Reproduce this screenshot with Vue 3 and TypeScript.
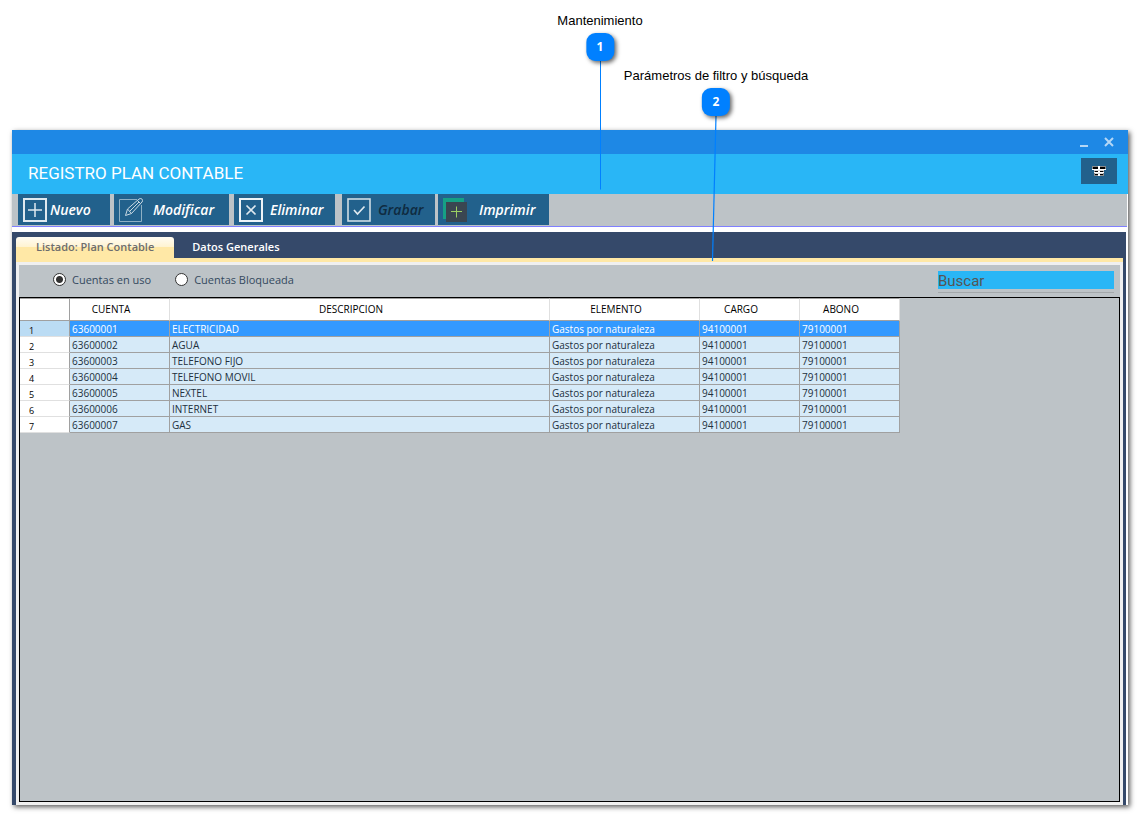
<script setup lang="ts">
import { ref } from 'vue'

interface Account {
  code: string
  description: string
  element: string
  debit: string
  credit: string
}

const names: string[] = ['ELECTRICIDAD', 'AGUA', 'TELEFONO FIJO', 'TELEFONO MOVIL', 'NEXTEL', 'INTERNET', 'GAS']
const accounts: Account[] = names.map((description, i) => ({
  code: `6360000${i + 1}`,
  description,
  element: 'Gastos por naturaleza',
  debit: '94100001',
  credit: '79100001',
}))

const selected = ref<number>(0)
const filter = ref<string>('uso')
const search = ref<string>('')
</script>

<template>
  <div class="page">
    <main class="window">
      <div class="titlebar">
        <button type="button" class="winbtn" aria-label="Minimizar">
          <svg width="10" height="12" viewBox="0 0 10 12"><path d="M1 10h8" stroke="#b4d7f6" stroke-width="2" /></svg>
        </button>
        <button type="button" class="winbtn" aria-label="Cerrar">
          <svg width="10" height="12" viewBox="0 0 10 12"><path d="M1 2l8 8M9 2l-8 8" stroke="#b4d7f6" stroke-width="2" /></svg>
        </button>
      </div>

      <header class="header">
        <h1>REGISTRO PLAN CONTABLE</h1>
        <button type="button" class="gridbtn" aria-label="Columnas">
          <svg width="14" height="10" viewBox="0 0 14 10" shape-rendering="crispEdges">
            <path d="M0 0h14v3H0zM2 5h10v5H2z" fill="#8a8a8a" />
            <path d="M1 1h12v2H1zM3 5h8v1H3zM3 8h8v1H3z" fill="#000" />
            <path d="M0 3h14v1H0zM2 6h10v1H2zM6 0h2v10H6z" fill="#fff" />
            <path d="M2 4h10v1H2zM3 7h8v1H3z" fill="#ddd" />
          </svg>
        </button>
      </header>

      <nav class="toolbar" aria-label="Mantenimiento">
        <button type="button" class="tool nuevo">
          <svg width="24" height="24" viewBox="0 0 24 24" fill="none">
            <rect x="1" y="1" width="22" height="22" stroke="#dfe9ef" stroke-width="2" />
            <path d="M12 5v14M5 12h14" stroke="#dfe9ef" stroke-width="1.5" />
          </svg>
          <span>Nuevo</span>
        </button>
        <button type="button" class="tool modificar">
          <svg width="24" height="24" viewBox="0 0 24 24" fill="none" stroke="#c9d9e3">
            <path d="M18 1.500H.5V23.500H22.500V7" stroke="#8fb0c4" />
            <path d="M6.500 17.500l2-6.500L20 1q2-1.200 3.200.300 1 1.500-.2 2.700L12.500 15.500zM8.500 11l4 4.500M18.500 2.500l3 3M10.500 13.500l9.500-9.500" />
          </svg>
          <span>Modificar</span>
        </button>
        <button type="button" class="tool eliminar">
          <svg width="24" height="24" viewBox="0 0 24 24" fill="none">
            <rect x="1" y="1" width="22" height="22" stroke="#eef3f6" stroke-width="2" />
            <path d="M7.500 7.500l9 9M16.500 7.500l-9 9" stroke="#dfe9ef" stroke-width="1.700" />
          </svg>
          <span>Eliminar</span>
        </button>
        <button type="button" class="tool grabar" disabled>
          <svg width="24" height="24" viewBox="0 0 24 24" fill="none">
            <rect x="1" y="1" width="22" height="22" stroke="#cfdce4" stroke-width="1.600" />
            <path d="M7 12l3.500 4L17.500 8.500" stroke="#dfe9ef" stroke-width="1.700" />
          </svg>
          <span>Grabar</span>
        </button>
        <button type="button" class="tool imprimir">
          <svg width="24" height="24" viewBox="0 0 24 24" fill="none">
            <path d="M0 0h21v4H3v17H0z" fill="#16a085" />
            <rect x="3" y="4" width="21" height="20" fill="#3a4651" />
            <path d="M13.500 8.500v11M8 13.500h11" stroke="#9bcf63" />
          </svg>
          <span>Imprimir</span>
        </button>
      </nav>

      <section class="workspace">
        <div class="tabs" role="tablist">
          <button type="button" class="tab active" role="tab" aria-selected="true">Listado: Plan Contable</button>
          <button type="button" class="tab" role="tab" aria-selected="false">Datos Generales</button>
        </div>
        <div class="panel">
          <div class="filters">
            <label class="option"><input v-model="filter" type="radio" name="estado" value="uso" />Cuentas en uso</label>
            <label class="option"><input v-model="filter" type="radio" name="estado" value="bloqueada" />Cuentas Bloqueada</label>
            <div class="search">
              <input v-model="search" type="text" placeholder="Buscar" aria-label="Buscar" />
            </div>
          </div>
          <div class="listing">
            <table>
              <colgroup>
                <col class="c-num" /><col class="c-code" /><col class="c-desc" /><col class="c-elem" /><col class="c-code" /><col class="c-code" />
              </colgroup>
              <thead>
                <tr>
                  <th></th>
                  <th>CUENTA</th>
                  <th>DESCRIPCION</th>
                  <th>ELEMENTO</th>
                  <th>CARGO</th>
                  <th>ABONO</th>
                </tr>
              </thead>
              <tbody>
                <tr v-for="(a, i) in accounts" :key="a.code" :class="{ selected: i === selected }" @click="selected = i">
                  <th scope="row">{{ i + 1 }}</th>
                  <td>{{ a.code }}</td>
                  <td>{{ a.description }}</td>
                  <td>{{ a.element }}</td>
                  <td>{{ a.debit }}</td>
                  <td>{{ a.credit }}</td>
                </tr>
              </tbody>
            </table>
          </div>
        </div>
      </section>
    </main>

    <svg class="leaders" width="160" height="220" viewBox="0 0 160 220" fill="none" stroke="#0080ff" aria-hidden="true">
      <path d="M20.500 20V148.500" />
      <path d="M136 75L132.500 220" stroke-width="1.200" />
    </svg>
    <div class="callout one"><span>Mantenimiento</span><b>1</b></div>
    <div class="callout two"><span>Parámetros de filtro y búsqueda</span><b>2</b></div>
  </div>
</template>

<style>
html,
body {
  margin: 0;
  background: #fff;
}
</style>

<style scoped>
.page {
  position: relative;
  box-sizing: border-box;
  min-height: 100vh;
  padding: 130px 15px 9px 12px;
  display: flex;
  font-family: "Open Sans", "Noto Sans", sans-serif;
}
button {
  border: 0;
  padding: 0;
  background: none;
  font: inherit;
  cursor: pointer;
}
svg {
  display: block;
  flex: none;
}
.window {
  flex: 1;
  min-width: 0;
  display: flex;
  flex-direction: column;
  background: #fff;
  box-shadow: 2px 2px 5px rgba(0, 0, 0, 0.65);
}
.titlebar {
  height: 24px;
  display: flex;
  justify-content: flex-end;
  align-items: center;
  gap: 15px;
  padding-right: 14px;
  background: #1e88e5;
}
.header {
  height: 40px;
  display: flex;
  align-items: center;
  justify-content: space-between;
  padding: 0 11px 0 16px;
  background: #29b6f6;
}
h1 {
  margin: 0 0 2px;
  font: 400 17px/20px Roboto, sans-serif;
  color: #fff;
}
.gridbtn {
  width: 36px;
  height: 26px;
  margin-bottom: 6px;
  display: flex;
  align-items: center;
  justify-content: center;
  background: #22618c;
}
.toolbar {
  height: 32px;
  margin-right: 1px;
  display: flex;
  padding-left: 6px;
  background: #bdc3c7;
  border-bottom: 1px solid #8080ff;
}
.tool {
  height: 31px;
  display: flex;
  align-items: center;
  padding-left: 5px;
  background: #22618c;
  color: #fff;
  font-size: 14px;
  font-weight: 600;
  font-style: italic;
}
.tool:disabled {
  color: #0f2b40;
}
.nuevo {
  width: 92px;
  margin-right: 4px;
  gap: 3px;
}
.modificar {
  width: 115px;
  margin-right: 5px;
  gap: 10px;
}
.eliminar {
  width: 101px;
  margin-right: 7px;
  gap: 7px;
}
.grabar {
  width: 93px;
  margin-right: 3px;
  gap: 7px;
}
.imprimir {
  width: 111px;
  gap: 12px;
}
.workspace {
  flex: 1;
  display: flex;
  flex-direction: column;
  margin: 5px 2px 0 0;
  padding: 5px 3px 0 4px;
  background: #35496a;
}
.tabs {
  display: flex;
  height: 21px;
}
.tab {
  padding: 0 18px 2px;
  font-size: 11px;
  font-weight: 600;
  line-height: 19px;
  color: #fff;
  white-space: nowrap;
}
.tab.active {
  border-radius: 3px 3px 0 0;
  padding: 0 20px 2px;
  color: #6d6d6d;
  background: linear-gradient(#fffcf3, #fff3cf 50%, #ffe8a6 50%, #ffe8a6);
}
.panel {
  flex: 1;
  display: flex;
  flex-direction: column;
  padding: 3px;
  border-top: 4px solid #ffe8a6;
  background: #f0f0f0;
}
.filters {
  height: 32px;
  display: flex;
  align-items: center;
  padding: 0 6px 3px 34px;
  box-sizing: border-box;
  background: #bdc3c7;
  font-size: 11px;
  line-height: 13px;
  color: #34495e;
}
.option {
  display: flex;
  align-items: center;
  gap: 6px;
  margin-right: 24px;
}
.option input {
  appearance: none;
  box-sizing: border-box;
  width: 13px;
  height: 13px;
  margin: 0;
  border: 1px solid #333;
  border-radius: 50%;
  background: #fff;
}
.option input:checked {
  background: radial-gradient(circle, #333 3px, #fff 4px);
}
.search {
  width: 176px;
  margin: 5px 0 0 auto;
  padding-bottom: 3px;
  border-bottom: 1px solid #a3a8ab;
}
.search input {
  display: block;
  box-sizing: border-box;
  width: 100%;
  height: 18px;
  padding: 2px 0 0;
  border: 0;
  outline: 0;
  background: #29b6f6;
  color: #333;
  font: 15px/16px Roboto, sans-serif;
}
.search input::placeholder {
  color: #555;
  opacity: 1;
}
.listing {
  flex: 1;
  border: 1px solid #000;
  background: #bdc3c7;
}
table {
  width: 880px;
  table-layout: fixed;
  border-collapse: separate;
  border-spacing: 0;
  font-size: 10px;
  line-height: 13px;
  color: #22303d;
}
.c-num {
  width: 50px;
}
.c-code {
  width: 100px;
}
.c-desc {
  width: 380px;
}
.c-elem {
  width: 150px;
}
th,
td {
  box-sizing: border-box;
  padding: 2px 2px 0;
  text-align: left;
  font-weight: 400;
  white-space: nowrap;
}
thead th {
  height: 23px;
  padding: 0 19px 0 2px;
  border-top: 1px solid #a0a0a0;
  border-right: 1px solid #e0e0e0;
  border-bottom: 1px solid #a0a0a0;
  background: #fff;
  color: #000;
  text-align: center;
}
thead th:first-child {
  border-right-color: #a0a0a0;
}
tbody td,
tbody th {
  height: 16px;
  border-right: 1px solid #a0a0a0;
  border-bottom: 1px solid #a0a0a0;
}
tbody td {
  background: #d6eaf8;
}
tbody th {
  padding: 5px 0 0 9px;
  border-bottom-color: #e0e0e0;
  background: #fff;
  color: #000;
  font-size: 9px;
  line-height: 10px;
}
.selected td {
  background: #3399ff;
  color: #fff;
}
.selected th {
  background: #bbdcf4;
}
.leaders {
  position: absolute;
  left: 580px;
  top: 41px;
  pointer-events: none;
}
.callout {
  position: absolute;
  transform: translateX(-50%);
  display: flex;
  flex-direction: column;
  align-items: center;
  gap: 4px;
  font: 13px/16px "Liberation Sans", Arial, sans-serif;
  color: #000;
  white-space: nowrap;
}
.one {
  left: 600px;
  top: 13px;
}
.two {
  left: 716px;
  top: 68px;
}
.callout b {
  width: 28px;
  height: 28px;
  border-radius: 9px;
  background: #0080ff;
  box-shadow: 2px 2px 4px rgba(0, 0, 0, 0.6);
  color: #fff;
  font: 700 12px/28px "Open Sans", sans-serif;
  text-align: center;
}
</style>
